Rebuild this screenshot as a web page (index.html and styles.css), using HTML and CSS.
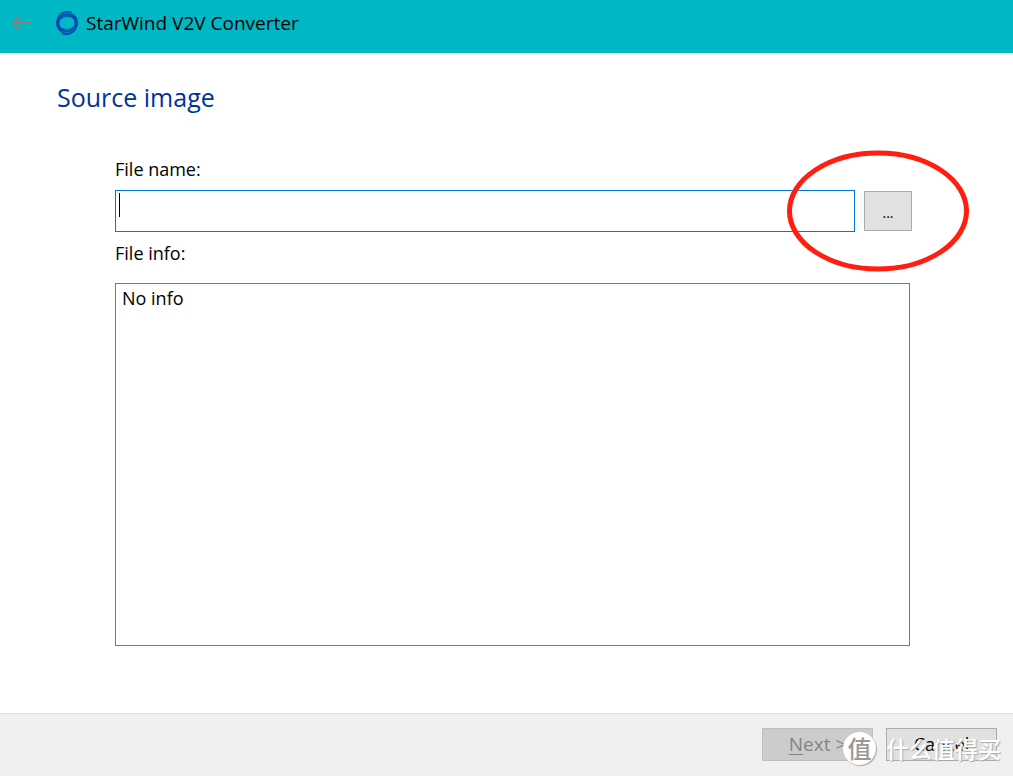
FILE: index.html
```html
<!DOCTYPE html>
<html lang="en">
<head>
<meta charset="utf-8">
<title>StarWind V2V Converter</title>
<link rel="stylesheet" href="styles.css">
</head>
<body>
<div class="wizard">
  <header class="titlebar">
    <button class="back" type="button" aria-label="Back">
      <svg width="22" height="18" viewBox="0 0 22 18" fill="none" stroke="#8c8080" stroke-width="2.200"><path d="M21 9H3M10 2.500L3.500 9l6.500 6.500"/></svg>
    </button>
    <svg class="logo" width="24" height="24" viewBox="0 0 24 24" fill="none" stroke="#0548b0">
      <circle cx="12" cy="12" r="9.300" stroke-width="3.400"/>
      <path d="M3 6C6 1 12-.5 17 1.200M21 18c-3 5-9 6.500-14 4.800" stroke-width="1.200"/>
      <path d="M4 7C7 2 13 1 18 4M20 17c-3 5-9 6-14 3" stroke="#0894bd" stroke-width=".8"/>
      <path d="M6 8C9 5 13 4.500 18 7M18 16c-3 3-7 3.500-12 1" stroke-width="1"/>
    </svg>
    <span class="app-name">StarWind V2V Converter</span>
  </header>
  <main class="page">
    <h1 class="heading">Source image</h1>
    <form class="form">
      <label class="label" for="file">File name:</label>
      <div class="file-row">
        <div class="file-field">
          <input class="file-input" id="file" type="text">
          <span class="caret"></span>
        </div>
        <button class="browse" type="button">...</button>
        <svg class="marker" width="182" height="122" viewBox="0 0 182 122"><ellipse cx="91" cy="61" rx="88.500" ry="58" fill="none" stroke="#ff1e10" stroke-width="5"/></svg>
      </div>
      <label class="label info-label" for="info">File info:</label>
      <textarea class="info" id="info" readonly>No info</textarea>
    </form>
  </main>
  <footer class="actions">
    <button class="action next" type="button" disabled><span><u>N</u>ext &gt;</span></button>
    <button class="action" type="button">Cancel</button>
    <div class="watermark" lang="zh">
      <span class="badge">值</span>
      <span class="brand">什么值得买</span>
    </div>
  </footer>
</div>
</body>
</html>
```
FILE: styles.css
```css
* { box-sizing: border-box; }
body { margin: 0; }
.wizard {
  display: flex;
  flex-direction: column;
  min-height: 100vh;
  background: #fff;
  color: #000;
  font-family: "Open Sans", "Noto Sans CJK SC", sans-serif;
  font-size: 18px;
  line-height: 26px;
}
button, input, textarea { font: inherit; color: inherit; border-radius: 0; }
.titlebar {
  display: flex;
  align-items: center;
  height: 53px;
  padding: 0 10px 7px;
  background: #00b7c6;
}
.back { display: flex; padding: 0; border: 0; background: none; }
.logo { margin: 0 7px 0 23px; }
.app-name { font-size: 19px; }
.page {
  flex: 1;
  display: flex;
  flex-direction: column;
  padding: 26px 101px 67px 57px;
}
.heading {
  margin: 0 0 41px;
  color: #003399;
  font-size: 25px;
  font-weight: 400;
  line-height: 36px;
}
.form { flex: 1; display: flex; flex-direction: column; margin-left: 58px; }
.label { line-height: 26px; }
.file-row {
  position: relative;
  display: flex;
  align-items: center;
  gap: 9px;
  margin: 8px 0;
}
.file-field { position: relative; flex: 1; display: flex; }
.file-input {
  width: 100%;
  height: 42px;
  padding: 0 5px;
  border: 1px solid #0078d7;
  outline: 0;
  background: #fff;
}
.caret { position: absolute; left: 4px; top: 3px; width: 1px; height: 24px; background: #000; }
.browse {
  width: 48px;
  height: 40px;
  padding: 4px 0 0;
  border: 1px solid #adadad;
  background: #e1e1e1;
  font-size: 14px;
}
.marker { position: absolute; right: -57px; top: -40px; pointer-events: none; }
.info-label { margin-bottom: 17px; }
.info {
  flex: 1;
  margin-right: 2px;
  padding: 1px 6px;
  border: 1px solid #7a7a7a;
  outline: 0;
  background: #fff;
  resize: none;
}
.actions {
  position: relative;
  display: flex;
  justify-content: flex-end;
  gap: 13px;
  height: 63px;
  padding: 14px 16px;
  border-top: 1px solid #dfdfdf;
  background: #f0f0f0;
}
.action {
  width: 111px;
  height: 33px;
  padding: 0 0 2px;
  border: 1px solid #adadad;
  background: #e1e1e1;
}
.next { border-color: #bfbfbf; background: #ccc; color: #838383; font-size: 19px; }
.next u { text-underline-offset: 3px; }
.watermark {
  position: absolute;
  right: 12px;
  bottom: 11px;
  display: flex;
  align-items: center;
  gap: 10px;
  color: #fff;
  font-family: "Noto Sans CJK SC", sans-serif;
  pointer-events: none;
}
.badge {
  width: 33px;
  height: 33px;
  border-radius: 50%;
  background: #fff;
  box-shadow: 1px 1px 1px #aaa;
  color: #999;
  font-size: 24px;
  font-weight: 500;
  line-height: 31px;
  text-align: center;
}
.brand { font-size: 23px; font-weight: 500; line-height: 31px; text-shadow: 1px 1px 1px #aaa; }
```
